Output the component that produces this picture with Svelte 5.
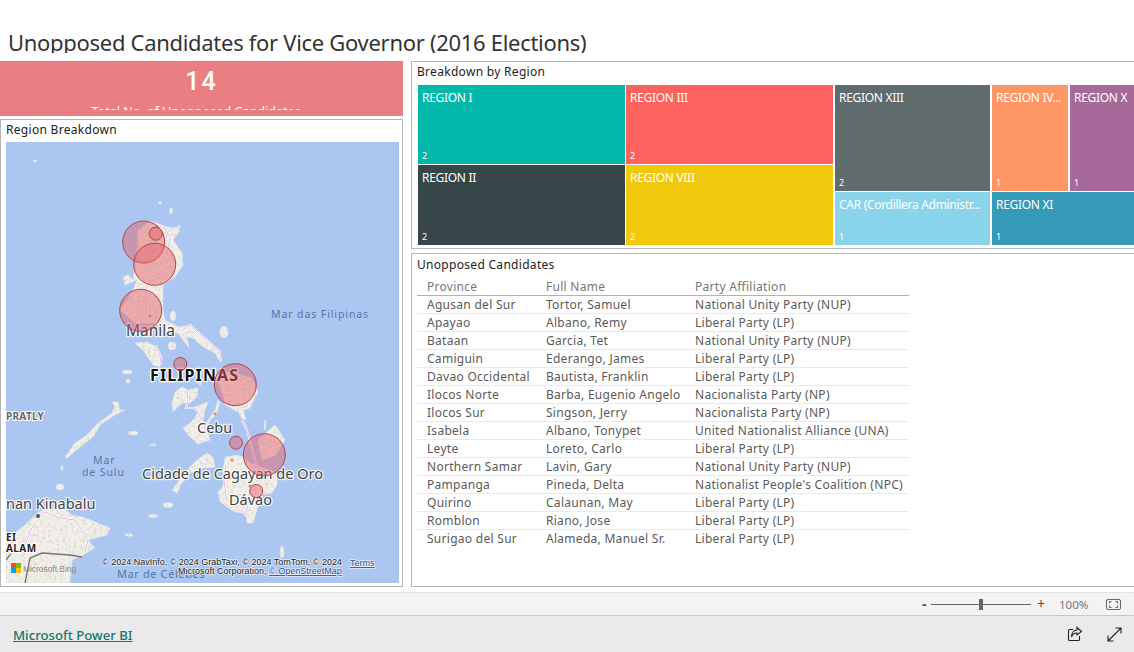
<script>
  const tiles = {
    left: [
      { name: "REGION I", value: 2, color: "#01b8aa" },
      { name: "REGION III", value: 2, color: "#fd625e" },
      { name: "REGION II", value: 2, color: "#374649" },
      { name: "REGION VIII", value: 2, color: "#f2c80f" },
    ],
    top: [
      { name: "REGION XIII", value: 2, color: "#5f6b6d", w: 155 },
      { name: "REGION IV...", value: 1, color: "#fe9666", w: 76 },
      { name: "REGION X", value: 1, color: "#a66999", w: 78 },
    ],
    bottom: [
      { name: "CAR (Cordillera Administr...", value: 1, color: "#8ad4eb", w: 155 },
      { name: "REGION XI", value: 1, color: "#3599b8", w: 156 },
    ],
  };

  const rows = [
    ["Agusan del Sur", "Tortor, Samuel", "National Unity Party (NUP)"],
    ["Apayao", "Albano, Remy", "Liberal Party (LP)"],
    ["Bataan", "Garcia, Tet", "National Unity Party (NUP)"],
    ["Camiguin", "Ederango, James", "Liberal Party (LP)"],
    ["Davao Occidental", "Bautista, Franklin", "Liberal Party (LP)"],
    ["Ilocos Norte", "Barba, Eugenio Angelo", "Nacionalista Party (NP)"],
    ["Ilocos Sur", "Singson, Jerry", "Nacionalista Party (NP)"],
    ["Isabela", "Albano, Tonypet", "United Nationalist Alliance (UNA)"],
    ["Leyte", "Loreto, Carlo", "Liberal Party (LP)"],
    ["Northern Samar", "Lavin, Gary", "National Unity Party (NUP)"],
    ["Pampanga", "Pineda, Delta", "Nationalist People's Coalition (NPC)"],
    ["Quirino", "Calaunan, May", "Liberal Party (LP)"],
    ["Romblon", "Riano, Jose", "Liberal Party (LP)"],
    ["Surigao del Sur", "Alameda, Manuel Sr.", "Liberal Party (LP)"],
  ];

  // land outlines, in page coordinates
  const land = [
    "150,221 168,227 175,228 180,225 179,232 173,240 182,253 183,265 175,277 163,285 163,310 165,320 175,325 180,327 190,325 200,333 210,342 220,353 221,363 215,353 203,347 193,338 187,337 189,348 183,340 178,333 163,330 153,323 135,323 120,310 133,290 137,280 125,285 123,277 128,275 133,280 137,253 138,230",
    "135,343 147,342 157,347 162,357 160,367 153,365 143,350",
    "175,392 182,387 188,390 198,388 197,397 190,403 182,403 173,412 172,403",
    "195,407 208,402 205,410 203,420 208,433 210,440 198,444 190,437 183,428 190,423 195,418 198,412",
    "215,410 218,400 220,403 216,415 210,420 205,433 202,435 207,422",
    "237,408 242,407 246,420 241,418",
    "215,375 232,372 252,378 258,392 250,408 238,412 225,405 222,392",
    "258,440 275,425 285,440 276,455 262,460",
    "225,457 237,455 243,457 250,463 277,473 277,485 272,493 260,495 257,510 253,523 247,523 246,513 235,512 220,502 218,492 225,483 223,470",
    "172,490 182,477 190,467 197,460 207,453 213,457 215,467 203,468 190,473 182,483 177,493",
    "112,402 118,402 120,410 125,410 115,415 100,425 93,437 80,447 67,458 65,457 75,443 87,435 98,423 112,413 115,407",
    "6,540 25,525 37,513 47,508 63,508 72,515 83,517 110,528 107,535 88,540 95,548 83,555 72,560 70,583 6,583",
  ];
  const islets = [
    [133, 433, 5, 2], [168, 505, 5, 2.5], [153, 445, 3, 1], [35, 161, 2, 1],
    [160, 203, 2, 1], [171, 211, 1.5, 3], [129, 535, 4, 1.2],
    [173, 316, 3, 5], [172, 346, 4, 4], [224, 332, 4, 6], [200, 382, 1, 4],
    [127, 372, 5, 2], [128, 381, 2, 2], [265, 425, 1, 5], [60, 487, 4, 3],
    [153, 516, 5, 1.5], [282, 552, 2, 6], [62, 468, 1, 3],
  ];
  const borders = [
    "148,222 165,228 170,238 167,255 178,262 165,275 150,282 145,290 147,315",
    "182,330 190,325 200,335 210,343 220,352 221,362",
    "156,345 160,355 161,365",
    "187,390 188,400 186,408 195,408 198,412 205,428 202,436",
    "242,420 247,430 255,460 262,480",
    "226,465 224,480 226,500 240,510 246,515 250,490",
    "6,555 25,545 33,525 45,512 60,518 75,520 82,530 88,540 85,552",
  ];
  const bubbles = [
    [143.7, 242, 21], [155.7, 233.7, 6.5], [154.7, 264.3, 21], [140.7, 310.3, 21],
    [180.3, 364, 6.5], [235.3, 384.7, 21], [236, 442.7, 6.5], [264.3, 454.7, 21], [256.3, 491, 6.5],
  ];
</script>

<div class="page">
  <h1><span>Unopposed Candidates for Vice Governor (2016 Elections)</span></h1>

  <div class="canvas">
    <div class="left">
      <div class="kpi">
        <div class="kpi-clip">
          <div class="kpi-num">14</div>
          <div class="kpi-label">Total No. of Unopposed Candidates</div>
        </div>
      </div>

      <section class="card map-card">
        <div class="card-title">Region Breakdown</div>
        <div class="map">
          <svg viewBox="6 142 393 441" width="393" height="441">
            <defs>
              <filter id="rough" x="0" y="0" width="100%" height="100%">
                <feTurbulence type="fractalNoise" baseFrequency="0.35" numOctaves="2" seed="4" result="n" />
                <feColorMatrix in="n" type="matrix" values="0 0 0 0 0.55  0 0 0 0 0.55  0 0 0 0 0.5  1.6 0 0 0 -0.72" result="speck" />
                <feComposite in="speck" in2="SourceAlpha" operator="in" result="tex" />
                <feGaussianBlur in="SourceGraphic" stdDeviation="0.45" result="soft" />
                <feMerge>
                  <feMergeNode in="soft" />
                  <feMergeNode in="tex" />
                </feMerge>
              </filter>
            </defs>
            <rect x="6" y="142" width="393" height="441" fill="#abc6f0" />
            <g filter="url(#rough)">
              {#each land as pts}
                <polygon points={pts} class="land" />
              {/each}
              {#each islets as [cx, cy, rx, ry]}
                <ellipse {cx} {cy} {rx} {ry} class="land" />
              {/each}
            </g>
            <polyline points="25,583 30,558 42,553 70,555 82,557" class="terrain" />
            <polyline points="6,560 12,552" class="terrain" />
            {#each borders as pts}
              <polyline points={pts} class="border-w" />
              <polyline points={pts} class="border" />
            {/each}
            <circle cx="38" cy="516" r="2" fill="#555" />
            <circle cx="215" cy="414" r="1.5" fill="#e8875a" />
            <circle cx="232" cy="460" r="1.5" fill="#e8875a" />
            <circle cx="250" cy="486" r="1.5" fill="#e8875a" />
            <circle cx="150" cy="316" r="1.5" fill="#e8875a" />

            <text x="126" y="336" class="city manila">Manila</text>
            <text x="197" y="433" class="city">Cebu</text>
            <text x="142" y="479" class="city">Cidade de Cagayan de Oro</text>
            <text x="229" y="505" class="city">Dávao</text>
            <text x="6" y="509" class="city">nan Kinabalu</text>
            <text x="150" y="381" class="country">FILIPINAS</text>
            <text x="271" y="318" class="sea">Mar das Filipinas</text>
            <text x="93" y="464" class="sea">Mar</text>
            <text x="82" y="476" class="sea">de Sulu</text>
            <text x="117" y="578" class="sea wide">Mar de Célebes</text>
            <text x="6" y="420" class="isles">PRATLY</text>
            <text x="6" y="541" class="brunei">EI</text>
            <text x="6" y="552" class="brunei">ALAM</text>

            {#each bubbles as [cx, cy, r]}
              <circle {cx} {cy} {r} class="bubble" />
            {/each}

            <rect x="11" y="563" width="5" height="5" fill="#f25022" />
            <rect x="16" y="563" width="5" height="5" fill="#7fba00" />
            <rect x="11" y="568" width="5" height="5" fill="#00a4ef" />
            <rect x="16" y="568" width="5" height="5" fill="#ffb900" />
            <text x="23" y="572" class="bing">Microsoft Bing</text>

            <text x="102" y="565" class="attr">© 2024 NavInfo, © 2024 GrabTaxi, © 2024 TomTom, © 2024</text>
            <text x="178" y="574" class="attr">Microsoft Corporation, <tspan class="attr-link">© OpenStreetMap</tspan></text>
            <text x="350" y="566" class="attr attr-link">Terms</text>
          </svg>
        </div>
      </section>
    </div>

    <div class="right">
      <section class="card tree-card">
        <div class="card-title">Breakdown by Region</div>
        <div class="tree">
          <div class="tree-left">
            {#each tiles.left as t}
              <div class="tile" style:background={t.color}>
                <span class="tile-name">{t.name}</span>
                <span class="tile-value">{t.value}</span>
              </div>
            {/each}
          </div>
          <div class="tree-right">
            <div class="tree-row top">
              {#each tiles.top as t}
                <div class="tile" style:background={t.color} style:width="{t.w}px">
                  <span class="tile-name">{t.name}</span>
                  <span class="tile-value">{t.value}</span>
                </div>
              {/each}
            </div>
            <div class="tree-row bottom">
              {#each tiles.bottom as t}
                <div class="tile" style:background={t.color} style:width="{t.w}px">
                  <span class="tile-name">{t.name}</span>
                  <span class="tile-value">{t.value}</span>
                </div>
              {/each}
            </div>
          </div>
        </div>
      </section>

      <section class="card table-card">
        <div class="card-title">Unopposed Candidates</div>
        <table>
          <thead>
            <tr><th class="c1">Province</th><th class="c2">Full Name</th><th>Party Affiliation</th></tr>
          </thead>
          <tbody>
            {#each rows as r}
              <tr>
                <td>{r[0]}</td>
                <td>{r[1]}</td>
                <td>{r[2]}</td>
              </tr>
            {/each}
          </tbody>
        </table>
      </section>
    </div>
  </div>

  <div class="statusbar">
    <span class="zoom-btn minus">-</span>
    <div class="slider"><div class="thumb"></div></div>
    <span class="zoom-btn plus">+</span>
    <span class="pct">100%</span>
    <svg class="fit" width="15" height="11" viewBox="0 0 15 11" fill="none" stroke="#666">
      <rect x="0.5" y="0.5" width="14" height="10" rx="1.5" />
      <path d="M3.5 4.5V2.5H5.5M9.5 2.5H11.5V4.5M11.5 6.5V8.5H9.5M5.5 8.5H3.5V6.5" />
    </svg>
  </div>

  <footer>
    <a href="#top" class="brand">Microsoft Power BI</a>
    <div class="footer-icons">
      <svg width="16" height="16" viewBox="0 0 16 16" fill="none" stroke="#222" stroke-width="1.1">
        <path d="M6 3.5H2.5a1 1 0 0 0-1 1v9a1 1 0 0 0 1 1h9a1 1 0 0 0 1-1V10" />
        <path d="M10 1.5L14.5 5.5L10 9V7C7.5 7 5.5 8 4.5 11C4.5 7 6.5 4 10 4Z" />
      </svg>
      <svg width="15" height="15" viewBox="0 0 15 15" fill="none" stroke="#222" stroke-width="1.1">
        <path d="M1 14L14 1M8.5 1H14V6.5M1 8.5V14H6.5" />
      </svg>
    </div>
  </footer>
</div>

<style>
  :global(body) {
    margin: 0;
    background: #fff;
  }

  .page {
    width: 1134px;
    height: 652px;
    overflow: hidden;
    display: flex;
    flex-direction: column;
    font-family: "Noto Sans", "Open Sans", sans-serif;
    color: #222;
  }

  h1 {
    margin: 0;
    height: 61px;
    flex: none;
    box-sizing: border-box;
    padding: 27px 0 0 8px;
    font-size: 22px;
    letter-spacing: -0.3px;
    font-weight: 400;
    color: #333;
  }

  h1 span {
    display: block;
    height: 26px;
    line-height: 30px;
    overflow: hidden;
    white-space: nowrap;
  }

  .canvas {
    flex: none;
    height: 526px;
    display: flex;
    gap: 8px;
  }

  .left {
    width: 403px;
    flex: none;
    display: flex;
    flex-direction: column;
    gap: 3px;
  }

  .right {
    width: 760px;
    flex: none;
    display: flex;
    flex-direction: column;
    gap: 4px;
  }

  .kpi {
    height: 55px;
    flex: none;
    background: #e97f83;
    color: #fff;
    text-align: center;
  }

  .kpi-clip {
    height: 49px;
    overflow: hidden;
  }

  .kpi-num {
    height: 41px;
    padding-top: 4px;
    box-sizing: border-box;
    font-family: Roboto, sans-serif;
    font-size: 25px;
    font-weight: 500;
    letter-spacing: 2px;
    line-height: 33px;
  }

  .kpi-label {
    font-size: 13px;
    line-height: 18px;
    letter-spacing: -0.2px;
    padding-right: 11px;
  }

  .card {
    border: 1px solid #b5b5b5;
    background: #fff;
    box-sizing: border-box;
  }

  .card-title {
    font-size: 12px;
    line-height: 18px;
    height: 18px;
    letter-spacing: 0.3px;
    color: #222;
  }

  .map-card {
    flex: 1;
    padding: 1px 3px 3px 5px;
  }

  .map {
    margin-top: 3px;
    height: 441px;
    width: 393px;
    overflow: hidden;
  }

  .map svg {
    display: block;
  }

  .land {
    fill: #f3f0ea;
    stroke: #dfe6ee;
    stroke-width: 0.6;
  }

  .terrain {
    fill: none;
    stroke: #777;
    stroke-width: 1.4;
  }

  .border-w {
    fill: none;
    stroke: #fff;
    stroke-width: 2;
  }

  .border {
    fill: none;
    stroke: #d9a9d0;
    stroke-width: 0.8;
  }

  .bubble {
    fill: #e4636a;
    fill-opacity: 0.48;
    stroke: #b8434b;
    stroke-width: 1;
  }

  text {
    paint-order: stroke;
    stroke-linejoin: round;
  }

  .city {
    font-size: 14.5px;
    fill: #444;
    stroke: #fff;
    stroke-width: 2.5px;
    stroke-opacity: 0.85;
  }

  .city.manila {
    font-size: 15.5px;
  }

  .country {
    font-size: 16px;
    font-weight: 700;
    letter-spacing: 1.1px;
    fill: #111;
    stroke: #fff;
    stroke-width: 2.5px;
  }

  .sea {
    font-size: 10.5px;
    letter-spacing: 0.9px;
    fill: #5677ac;
  }

  .sea.wide {
    font-size: 11px;
    letter-spacing: 0.6px;
  }

  .isles {
    font-size: 10px;
    font-weight: 700;
    letter-spacing: 0.3px;
    fill: #666;
    stroke: #fff;
    stroke-width: 2px;
  }

  .brunei {
    font-size: 10px;
    font-weight: 700;
    letter-spacing: 0.4px;
    fill: #222;
    stroke: #fff;
    stroke-width: 2px;
  }

  .bing {
    font-family: "Liberation Sans", sans-serif;
    font-size: 8.4px;
    fill: #888;
  }

  .attr {
    font-family: "Liberation Sans", sans-serif;
    font-size: 9px;
    fill: #222;
    stroke: #fff;
    stroke-width: 1.5px;
    stroke-opacity: 0.7;
  }

  .attr-link {
    fill: #2c4fa8;
    text-decoration: underline;
  }

  .tree-card {
    height: 188px;
    flex: none;
    padding: 1px 0 0 5px;
  }

  .tree {
    display: flex;
    gap: 2px;
    margin-top: 4px;
    height: 160px;
    margin-left: 1px;
  }

  .tree-left {
    width: 415px;
    flex: none;
    display: grid;
    grid-template-columns: 207px 207px;
    grid-template-rows: 79px 80px;
    gap: 1px;
  }

  .tree-right {
    display: flex;
    flex-direction: column;
    gap: 1px;
    height: 160px;
  }

  .tree-row {
    display: flex;
    gap: 2px;
  }

  .tree-row.top {
    height: 106px;
    flex: none;
  }

  .tree-row.bottom {
    height: 53px;
    flex: none;
  }

  .tile {
    position: relative;
    overflow: hidden;
    box-sizing: border-box;
    color: #fff;
    flex: none;
  }

  .tile-name {
    display: block;
    padding: 3.5px 0 0 4px;
    font-size: 12px;
    letter-spacing: -0.3px;
    line-height: 18px;
    white-space: nowrap;
  }

  .tile-value {
    position: absolute;
    left: 4px;
    bottom: 2px;
    font-size: 9px;
    line-height: 12px;
  }

  .table-card {
    height: 334px;
    flex: none;
    padding: 2px 0 0 5px;
  }

  table {
    border-collapse: collapse;
    table-layout: fixed;
    width: 492px;
    margin-top: 4px;
    font-size: 12px;
    letter-spacing: 0.28px;
    color: #5a5a5a;
  }

  th,
  td {
    padding: 0 0 0 10px;
    height: 18px;
    line-height: 17px;
    font-weight: 400;
    text-align: left;
    white-space: nowrap;
    box-sizing: border-box;
  }

  th {
    height: 17px;
    color: #777;
    border-bottom: 1px solid #b3b3b3;
  }

  .c1 {
    width: 119px;
  }

  .c2 {
    width: 149px;
  }

  td {
    border-bottom: 1px solid #eaeaea;
  }

  tbody tr:last-child td {
    border-bottom: none;
  }

  .statusbar {
    margin-top: 5px;
    height: 24px;
    flex: none;
    box-sizing: border-box;
    background: #f3f3f3;
    border-top: 1px solid #e3e3e3;
    border-bottom: 1px solid #c8c8c8;
    display: flex;
    align-items: center;
    color: #666;
    padding-left: 922px;
  }

  .zoom-btn {
    font-size: 14px;
    line-height: 1;
    color: #555;
  }

  .minus {
    width: 9px;
    font-weight: 700;
  }

  .slider {
    width: 100px;
    height: 1px;
    background: #666;
    position: relative;
  }

  .thumb {
    position: absolute;
    left: 48px;
    top: -5px;
    width: 4px;
    height: 11px;
    background: #666;
  }

  .plus {
    margin-left: 6px;
    width: 22px;
  }

  .pct {
    font-size: 11.5px;
    color: #777;
    width: 47px;
  }

  .fit {
    flex: none;
  }

  footer {
    flex: 1;
    background: #eaeaea;
    display: flex;
    align-items: center;
    padding: 2px 13px 0;
  }

  .brand {
    color: #117865;
    font-size: 13.2px;
    font-weight: 500;
    text-decoration: underline;
  }

  .footer-icons {
    margin-left: auto;
    display: flex;
    align-items: center;
    gap: 24px;
    margin-right: -1px;
    margin-top: -2px;
  }
</style>
